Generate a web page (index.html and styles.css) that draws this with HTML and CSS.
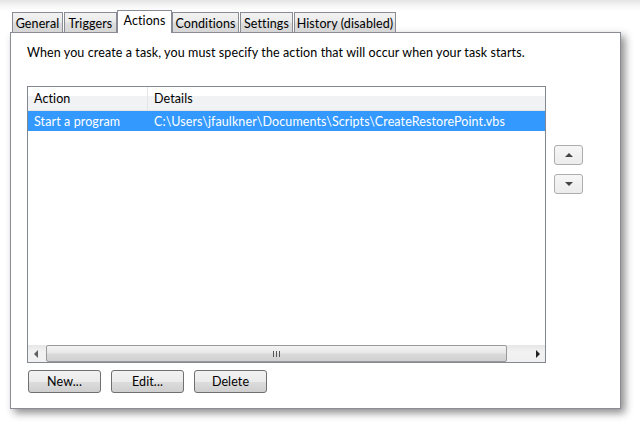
FILE: index.html
```html
<!DOCTYPE html>
<html>
<head>
<meta charset="utf-8">
<link rel="stylesheet" href="styles.css">
</head>
<body>
<div class="window">
  <div class="tabs">
    <div class="tab t-general">General</div>
    <div class="tab t-triggers">Triggers</div>
    <div class="tab t-actions active">Actions</div>
    <div class="tab t-conditions">Conditions</div>
    <div class="tab t-settings">Settings</div>
    <div class="tab t-history">History (disabled)</div>
  </div>
  <div class="panel">
    <p class="desc">When you create a task, you must specify the action that will occur when your task starts.</p>
    <div class="main">
      <div class="list">
        <div class="header">
          <div class="c1">Action</div>
          <div class="c2">Details</div>
        </div>
        <div class="row sel">
          <div class="c1">Start a program</div>
          <div class="c2">C:\Users\jfaulkner\Documents\Scripts\CreateRestorePoint.vbs</div>
        </div>
        <div class="spacer"></div>
        <div class="hscroll">
          <div class="sb-btn"><span class="arr-left"></span></div>
          <div class="thumb"><span class="grip"><i></i><i></i><i></i></span></div>
          <div class="track"></div>
          <div class="sb-btn"><span class="arr-right"></span></div>
        </div>
      </div>
      <div class="side">
        <div class="mini"><span class="arr-up"></span></div>
        <div class="mini"><span class="arr-down"></span></div>
      </div>
    </div>
    <div class="buttons">
      <div class="btn">New...</div>
      <div class="btn">Edit...</div>
      <div class="btn">Delete</div>
    </div>
  </div>
</div>
</body>
</html>
```

FILE: styles.css
```css
html, body {
  margin: 0;
  padding: 0;
}
body {
  width: 640px;
  height: 428px;
  overflow: hidden;
  background: linear-gradient(to bottom, #e4e4e4 0, #f6f6f6 6px, #ffffff 11px) no-repeat;
  font-family: Lato, "Noto Sans", sans-serif;
  font-size: 12.5px;
  letter-spacing: 0.1px;
  color: #000;
}
.window {
  padding: 10px 0 0 10px;
}
.tabs {
  display: flex;
  align-items: flex-end;
  height: 22px;
  margin-left: 2px;
  position: relative;
  z-index: 2;
}
.tab {
  box-sizing: border-box;
  height: 20px;
  border: 1px solid #898c95;
  border-bottom: none;
  background: linear-gradient(to bottom, #f2f2f2 0, #ebebeb 45%, #dddddd 55%, #d6d6d6 100%);
  display: flex;
  align-items: center;
  justify-content: center;
  margin-right: 1px;
  line-height: 16px;
  padding-top: 2px;
  white-space: nowrap;
}
.tab.active {
  height: 23px;
  margin-bottom: -1px;
  background: #fff;
  padding-top: 0;
  padding-bottom: 3px;
}
.t-general { width: 51px; }
.t-triggers { width: 53px; }
.t-actions { width: 55px; margin-left: -1px; margin-right: 0; }
.t-conditions { width: 67px; }
.t-settings { width: 53px; }
.t-history { width: 102px; }

.panel {
  box-sizing: border-box;
  width: 611px;
  height: 377px;
  border: 1px solid #898c95;
  background: #fff;
  box-shadow: 4px 4px 8px rgba(0, 0, 0, 0.45);
  position: relative;
  z-index: 1;
}
.desc {
  margin: 0;
  padding: 12px 0 0 16px;
  line-height: 16px;
}
.main {
  display: flex;
  align-items: flex-start;
  margin-top: 25px;
  padding-left: 16px;
}
.list {
  box-sizing: border-box;
  width: 519px;
  height: 277px;
  border: 1px solid #828790;
  display: flex;
  flex-direction: column;
}
.header {
  display: flex;
  height: 23px;
  border-bottom: 1px solid #e3e4e6;
  background: linear-gradient(to bottom, #ffffff 0, #ffffff 9px, #f1f2f4 9px, #f1f2f4 100%);
  align-items: center;
}
.header .c1 {
  border-right: 1px solid #e3e4e6;
  height: 100%;
  display: flex;
  align-items: center;
}
.c1 {
  box-sizing: border-box;
  width: 120px;
  padding-left: 6px;
  white-space: nowrap;
}
.c2 {
  padding-left: 6px;
  white-space: nowrap;
}
.row {
  display: flex;
  align-items: center;
  height: 20px;
}
.sel {
  background: #3399ff;
  color: #fff;
}
.spacer { flex: 1; }
.hscroll {
  height: 17px;
  display: flex;
  background: linear-gradient(to bottom, #e6e6e6, #f2f2f2 40%, #f0f0f0);
}
.sb-btn {
  width: 17px;
  display: flex;
  align-items: center;
  justify-content: center;
}
.thumb {
  box-sizing: border-box;
  width: 461px;
  margin-left: 1px;
  border: 1px solid #9a9a9a;
  border-radius: 2px;
  background: linear-gradient(to bottom, #f3f3f3 0, #e8e8e8 45%, #d9d9d9 55%, #d0d0d0 100%);
  display: flex;
  align-items: center;
  justify-content: center;
}
.grip {
  display: flex;
  gap: 2px;
}
.grip i {
  display: block;
  width: 1px;
  height: 6px;
  background: #555;
}
.track { flex: 1; }
.arr-left {
  width: 0; height: 0;
  border-top: 4px solid transparent;
  border-bottom: 4px solid transparent;
  border-right: 4px solid #606060;
  margin-left: -1px;
}
.arr-right {
  width: 0; height: 0;
  border-top: 4px solid transparent;
  border-bottom: 4px solid transparent;
  border-left: 4px solid #222;
  margin-left: 2px;
}
.side {
  display: flex;
  flex-direction: column;
  gap: 9px;
  margin-left: 8px;
  padding-top: 59px;
}
.mini {
  box-sizing: border-box;
  width: 29px;
  height: 20px;
  border: 1px solid #adadad;
  border-radius: 3px;
  background: linear-gradient(to bottom, #f6f6f6, #ececec);
  display: flex;
  align-items: center;
  justify-content: center;
}
.arr-up {
  width: 0; height: 0;
  border-left: 4px solid transparent;
  border-right: 4px solid transparent;
  border-bottom: 4px solid #444;
}
.arr-down {
  width: 0; height: 0;
  border-left: 4px solid transparent;
  border-right: 4px solid transparent;
  border-top: 4px solid #444;
}
.buttons {
  display: flex;
  gap: 10px;
  margin-top: 7px;
  padding-left: 17px;
}
.btn {
  box-sizing: border-box;
  width: 73px;
  height: 23px;
  border: 1px solid #707070;
  border-radius: 3px;
  background: linear-gradient(to bottom, #f2f2f2 0, #ebebeb 50%, #dddddd 50%, #cfcfcf 100%);
  display: flex;
  align-items: center;
  justify-content: center;
  line-height: 16px;
}
```
